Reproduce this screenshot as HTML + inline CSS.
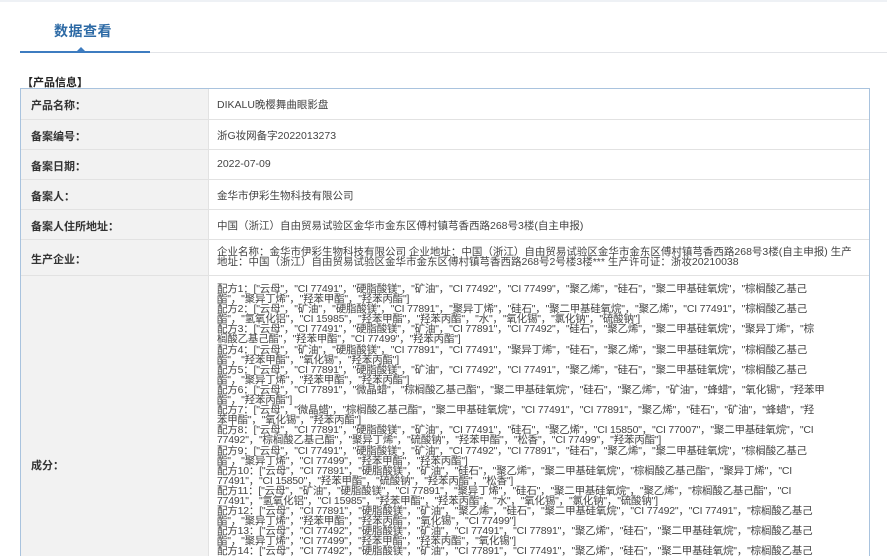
<!DOCTYPE html>
<html><head><meta charset="utf-8"><style>
html,body{margin:0;width:887px;height:556px;overflow:hidden}
body{background:#fff;font-family:"Liberation Sans","Noto Sans CJK SC",sans-serif;color:#333;position:relative}
.top{position:absolute;left:0;top:0;width:887px;height:2px;background:#eef1f5}
.tab{position:absolute;left:54px;top:21px;font-size:14px;color:#2d6aa5;font-weight:bold;letter-spacing:0.5px}
.line{position:absolute;left:150px;top:52px;width:737px;height:1px;background:#e2e4e8}
.bline{position:absolute;left:20px;top:51px;width:130px;height:2px;background:#3d7cc0}
.tri{position:absolute;left:77px;top:47px;width:0;height:0;border-left:4px solid transparent;border-right:4px solid transparent;border-bottom:4px solid #3d7cc0}
.hd{position:absolute;left:22px;top:74px;font-size:11px;font-weight:bold;color:#222}
.tbl{position:absolute;left:20px;top:88px;width:848px;height:468px;overflow:hidden;border-left:1px solid #a9c3de;border-right:1px solid #a9c3de;border-top:1px solid #a9c3de}
.row{position:absolute;left:0;width:848px;border-bottom:1px solid #e2e2e2}
.lab{position:absolute;left:0;top:0;bottom:0;width:187px;background:#f2f2f2;border-right:1px solid #e2e2e2}
.lt{position:absolute;left:10px;font-size:11px;font-weight:bold;color:#333}
.val{position:absolute;left:196px;font-size:10.5px;color:#444;white-space:nowrap}
.ing{position:absolute;left:196px;top:8px;font-size:10.5px;line-height:10.1px;color:#444;white-space:nowrap;letter-spacing:-0.2px}
</style></head><body>
<div class="top"></div>
<div class="tab">数据查看</div>
<div class="line"></div><div class="bline"></div><div class="tri"></div>
<div class="hd">【产品信息】</div>
<div class="tbl">
<div class="row" style="top:0;height:30px"><div class="lab"></div><div class="lt" style="top:8px">产品名称：</div><div class="val" style="top:8px">DIKALU晚樱舞曲眼影盘</div></div>
<div class="row" style="top:31px;height:29px"><div class="lab"></div><div class="lt" style="top:8px">备案编号：</div><div class="val" style="top:8px">浙G妆网备字2022013273</div></div>
<div class="row" style="top:61px;height:29px"><div class="lab"></div><div class="lt" style="top:8px">备案日期：</div><div class="val" style="top:8px">2022-07-09</div></div>
<div class="row" style="top:91px;height:29px"><div class="lab"></div><div class="lt" style="top:8px">备案人：</div><div class="val" style="top:8px">金华市伊彩生物科技有限公司</div></div>
<div class="row" style="top:121px;height:29px"><div class="lab"></div><div class="lt" style="top:8px">备案人住所地址：</div><div class="val" style="top:8px">中国（浙江）自由贸易试验区金华市金东区傅村镇芎香西路268号3楼(自主申报)</div></div>
<div class="row" style="top:151px;height:35px"><div class="lab"></div><div class="lt" style="top:11px">生产企业：</div><div class="val" style="top:7px;line-height:10px">企业名称：金华市伊彩生物科技有限公司 企业地址：中国（浙江）自由贸易试验区金华市金东区傅村镇芎香西路268号3楼(自主申报) 生产<br>地址：中国（浙江）自由贸易试验区金华市金东区傅村镇芎香西路268号2号楼3楼*** 生产许可证：浙妆20210038</div></div>
<div class="row" style="top:187px;height:380px;border-bottom:none"><div class="lab"></div><div class="lt" style="top:181px">成分：</div>
<div class="ing">配方1：["云母"，"CI 77491"，"硬脂酸镁"，"矿油"，"CI 77492"，"CI 77499"，"聚乙烯"，"硅石"，"聚二甲基硅氧烷"，"棕榈酸乙基己<br>酯"，"聚异丁烯"，"羟苯甲酯"，"羟苯丙酯"]<br>配方2：["云母"，"矿油"，"硬脂酸镁"，"CI 77891"，"聚异丁烯"，"硅石"，"聚二甲基硅氧烷"，"聚乙烯"，"CI 77491"，"棕榈酸乙基己<br>酯"，"氢氧化铝"，"CI 15985"，"羟苯甲酯"，"羟苯丙酯"，"水"，"氧化锡"，"氯化钠"，"硫酸钠"]<br>配方3：["云母"，"CI 77491"，"硬脂酸镁"，"矿油"，"CI 77891"，"CI 77492"，"硅石"，"聚乙烯"，"聚二甲基硅氧烷"，"聚异丁烯"，"棕<br>榈酸乙基己酯"，"羟苯甲酯"，"CI 77499"，"羟苯丙酯"]<br>配方4：["云母"，"矿油"，"硬脂酸镁"，"CI 77891"，"CI 77491"，"聚异丁烯"，"硅石"，"聚乙烯"，"聚二甲基硅氧烷"，"棕榈酸乙基己<br>酯"，"羟苯甲酯"，"氧化锡"，"羟苯丙酯"]<br>配方5：["云母"，"CI 77891"，"硬脂酸镁"，"矿油"，"CI 77492"，"CI 77491"，"聚乙烯"，"硅石"，"聚二甲基硅氧烷"，"棕榈酸乙基己<br>酯"，"聚异丁烯"，"羟苯甲酯"，"羟苯丙酯"]<br>配方6：["云母"，"CI 77891"，"微晶蜡"，"棕榈酸乙基己酯"，"聚二甲基硅氧烷"，"硅石"，"聚乙烯"，"矿油"，"蜂蜡"，"氧化锡"，"羟苯甲<br>酯"，"羟苯丙酯"]<br>配方7：["云母"，"微晶蜡"，"棕榈酸乙基己酯"，"聚二甲基硅氧烷"，"CI 77491"，"CI 77891"，"聚乙烯"，"硅石"，"矿油"，"蜂蜡"，"羟<br>苯甲酯"，"氧化锡"，"羟苯丙酯"]<br>配方8：["云母"，"CI 77891"，"硬脂酸镁"，"矿油"，"CI 77491"，"硅石"，"聚乙烯"，"CI 15850"，"CI 77007"，"聚二甲基硅氧烷"，"CI<br>77492"，"棕榈酸乙基己酯"，"聚异丁烯"，"硫酸钠"，"羟苯甲酯"，"松香"，"CI 77499"，"羟苯丙酯"]<br>配方9：["云母"，"CI 77491"，"硬脂酸镁"，"矿油"，"CI 77492"，"CI 77891"，"硅石"，"聚乙烯"，"聚二甲基硅氧烷"，"棕榈酸乙基己<br>酯"，"聚异丁烯"，"CI 77499"，"羟苯甲酯"，"羟苯丙酯"]<br>配方10：["云母"，"CI 77891"，"硬脂酸镁"，"矿油"，"硅石"，"聚乙烯"，"聚二甲基硅氧烷"，"棕榈酸乙基己酯"，"聚异丁烯"，"CI<br>77491"，"CI 15850"，"羟苯甲酯"，"硫酸钠"，"羟苯丙酯"，"松香"]<br>配方11：["云母"，"矿油"，"硬脂酸镁"，"CI 77891"，"聚异丁烯"，"硅石"，"聚二甲基硅氧烷"，"聚乙烯"，"棕榈酸乙基己酯"，"CI<br>77491"，"氢氧化铝"，"CI 15985"，"羟苯甲酯"，"羟苯丙酯"，"水"，"氧化锡"，"氯化钠"，"硫酸钠"]<br>配方12：["云母"，"CI 77891"，"硬脂酸镁"，"矿油"，"聚乙烯"，"硅石"，"聚二甲基硅氧烷"，"CI 77492"，"CI 77491"，"棕榈酸乙基己<br>酯"，"聚异丁烯"，"羟苯甲酯"，"羟苯丙酯"，"氧化锡"，"CI 77499"]<br>配方13：["云母"，"CI 77492"，"硬脂酸镁"，"矿油"，"CI 77491"，"CI 77891"，"聚乙烯"，"硅石"，"聚二甲基硅氧烷"，"棕榈酸乙基己<br>酯"，"聚异丁烯"，"CI 77499"，"羟苯甲酯"，"羟苯丙酯"，"氧化锡"]<br>配方14：["云母"，"CI 77492"，"硬脂酸镁"，"矿油"，"CI 77891"，"CI 77491"，"聚乙烯"，"硅石"，"聚二甲基硅氧烷"，"棕榈酸乙基己<br>酯"，"聚异丁烯"，"CI 77499"，"羟苯甲酯"，"羟苯丙酯"，"氧化锡"]</div>
</div>
</div>
</body></html>
